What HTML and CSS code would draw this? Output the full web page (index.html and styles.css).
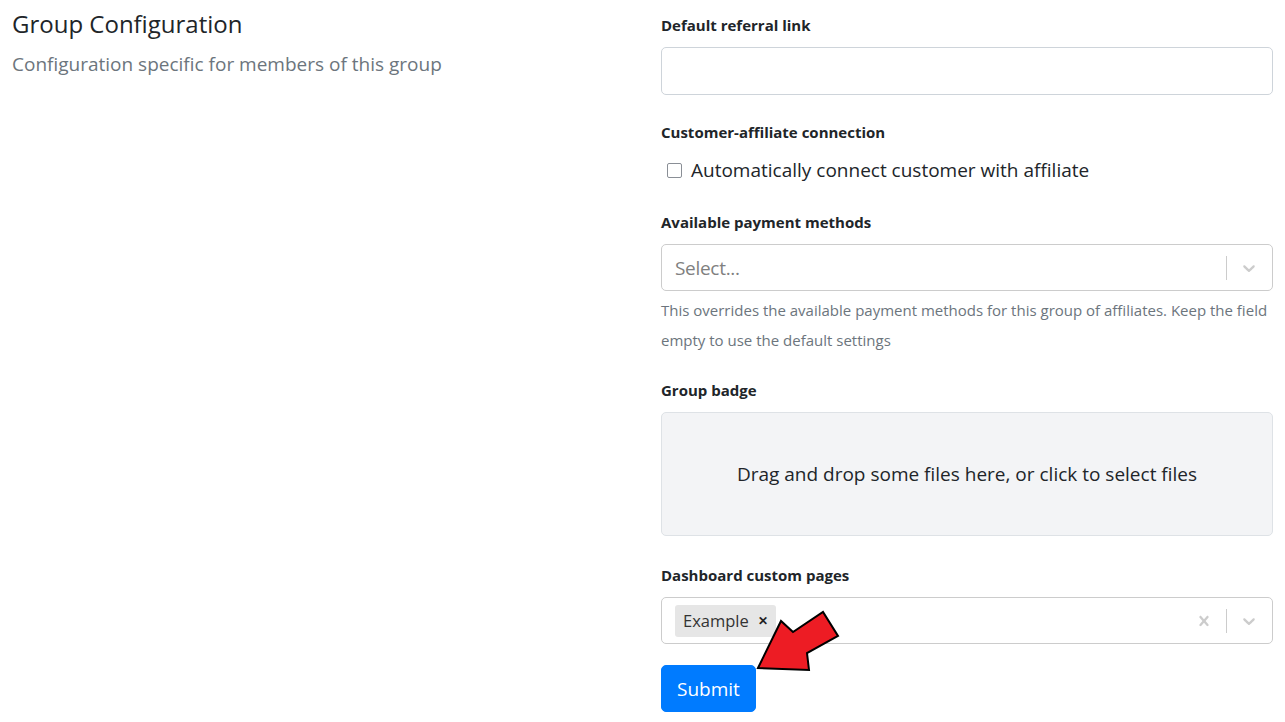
FILE: index.html
```html
<!DOCTYPE html>
<html lang="en">
<head>
<meta charset="utf-8">
<title>Group Configuration</title>
<link rel="stylesheet" href="styles.css">
</head>
<body>
<div class="page">
  <div class="intro">
    <h2 class="title">Group Configuration</h2>
    <p class="subtitle">Configuration specific for members of this group</p>
  </div>
  <form class="form">
    <div class="group group-first">
      <label class="label">Default referral link</label>
      <div class="input"></div>
    </div>
    <div class="group group-check">
      <label class="label">Customer-affiliate connection</label>
      <div class="check-row">
        <span class="checkbox"></span>
        <span class="check-text">Automatically connect customer with affiliate</span>
      </div>
    </div>
    <div class="group group-tight">
      <label class="label">Available payment methods</label>
      <div class="select">
        <span class="placeholder">Select...</span>
        <span class="indicators">
          <span class="sep"></span>
          <svg class="chev" width="20" height="20" viewBox="0 0 20 20"><path d="M4.516 7.548c.436-.446 1.043-.481 1.576 0L10 11.295l3.908-3.747c.533-.481 1.141-.446 1.574 0 .436.445.408 1.197 0 1.615-.406.418-4.695 4.502-4.695 4.502a1.095 1.095 0 0 1-1.576 0S4.924 9.581 4.516 9.163c-.409-.418-.436-1.17 0-1.615z" fill="#ccc"/></svg>
        </span>
      </div>
      <p class="help">This overrides the available payment methods for this group of affiliates. Keep the field empty to use the default settings</p>
    </div>
    <div class="group group-drop">
      <label class="label">Group badge</label>
      <div class="dropzone">Drag and drop some files here, or click to select files</div>
    </div>
    <div class="group group-last">
      <label class="label">Dashboard custom pages</label>
      <div class="select">
        <span class="chip"><span class="chip-text">Example</span><span class="chip-x">&#x2715;</span></span>
        <span class="indicators">
          <svg class="clear" width="20" height="20" viewBox="0 0 20 20"><path d="M14.348 14.849c-.469.469-1.229.469-1.697 0L10 11.819l-2.651 3.029c-.469.469-1.229.469-1.697 0-.469-.469-.469-1.229 0-1.697l2.758-3.150-2.759-3.152c-.469-.469-.469-1.228 0-1.697.469-.469 1.228-.469 1.697 0L10 8.183l2.651-3.031c.469-.469 1.228-.469 1.697 0 .469.469.469 1.229 0 1.697l-2.758 3.152 2.758 3.150c.469.469.469 1.229 0 1.698z" fill="#ccc"/></svg>
          <span class="sep"></span>
          <svg class="chev" width="20" height="20" viewBox="0 0 20 20"><path d="M4.516 7.548c.436-.446 1.043-.481 1.576 0L10 11.295l3.908-3.747c.533-.481 1.141-.446 1.574 0 .436.445.408 1.197 0 1.615-.406.418-4.695 4.502-4.695 4.502a1.095 1.095 0 0 1-1.576 0S4.924 9.581 4.516 9.163c-.409-.418-.436-1.170 0-1.615z" fill="#ccc"/></svg>
        </span>
      </div>
    </div>
    <div class="actions">
      <button type="button" class="btn">Submit</button>
      <svg class="arrow" width="90" height="70" viewBox="0 0 90 70"><polygon points="8,64 31,17 43,28 73,8 88,32 57,49 59,66" fill="#ed1c24" stroke="#000" stroke-width="2" stroke-linejoin="miter"/></svg>
    </div>
  </form>
</div>
</body>
</html>
```

FILE: styles.css
```css
* { box-sizing: border-box; }
html, body { margin: 0; padding: 0; background: #fff; }
body {
  font-family: "Open Sans", "Noto Sans", sans-serif;
  color: #212529;
  font-size: 20px;
}
.page {
  display: grid;
  grid-template-columns: 649px 612px;
  padding: 0 12px;
}
.intro { padding-top: 6px; }
.title {
  margin: 0;
  font-size: 24px;
  font-weight: 400;
  line-height: 36px;
}
.subtitle {
  margin: 8px 0 0;
  font-size: 19px;
  line-height: 28px;
  color: #6c757d;
}
.form { padding-top: 14px; display: flex; flex-direction: column; }
.group { margin-bottom: 26px; display: flex; flex-direction: column; }
.group-check { margin-bottom: 26px; }
.group-tight { margin-bottom: 24px; }
.group-drop { margin-bottom: 28px; }
.group-last { margin-bottom: 21px; }
.label {
  display: block;
  font-size: 15px;
  font-weight: 700;
  line-height: 22px;
  margin-bottom: 11px;
}
.input {
  height: 48px;
  border: 1px solid #ced4da;
  border-radius: 5px;
  background: #fff;
}
.check-row {
  display: flex;
  align-items: center;
  height: 30px;
  margin-top: 1px;
  padding-left: 6px;
}
.checkbox {
  width: 15px;
  height: 15px;
  border: 1.5px solid #8a8f96;
  border-radius: 2px;
  margin-right: 9px;
}
.check-text { font-size: 19px; }
.select {
  height: 47px;
  border: 1px solid #ccc;
  border-radius: 5px;
  display: flex;
  align-items: center;
  padding-left: 13px;
}
.placeholder { color: #808080; font-size: 19px; flex: 1; letter-spacing: -0.3px; }
.indicators {
  margin-left: auto;
  display: flex;
  align-items: center;
  height: 100%;
}
.sep { width: 1px; height: 24px; background: #ccc; margin: 0 12px; }
.chev { margin-right: 13px; }
.help {
  margin: 4px 0 0;
  font-size: 15px;
  line-height: 30px;
  color: #6c757d;
}
.dropzone {
  height: 124px;
  border: 1px solid #dee2e6;
  border-radius: 5px;
  background: #f3f4f6;
  display: flex;
  align-items: center;
  justify-content: center;
  font-size: 19px;
}
.chip {
  display: flex;
  align-items: center;
  height: 32px;
  background: #e6e6e6;
  border-radius: 3px;
  padding: 0 8px;
  margin-right: auto;
}
.chip-text { font-size: 16.5px; color: #333; }
.chip-x { font-size: 12px; font-weight: 700; margin-left: 9px; color: #222; }
.actions { position: relative; }
.btn {
  height: 47px;
  padding: 0 15px;
  background: #007bff;
  color: #fff;
  border: 1px solid #007bff;
  border-radius: 5px;
  font-family: inherit;
  font-size: 19px;
}
.arrow { position: absolute; left: 89px; top: -61px; overflow: visible; }
```
